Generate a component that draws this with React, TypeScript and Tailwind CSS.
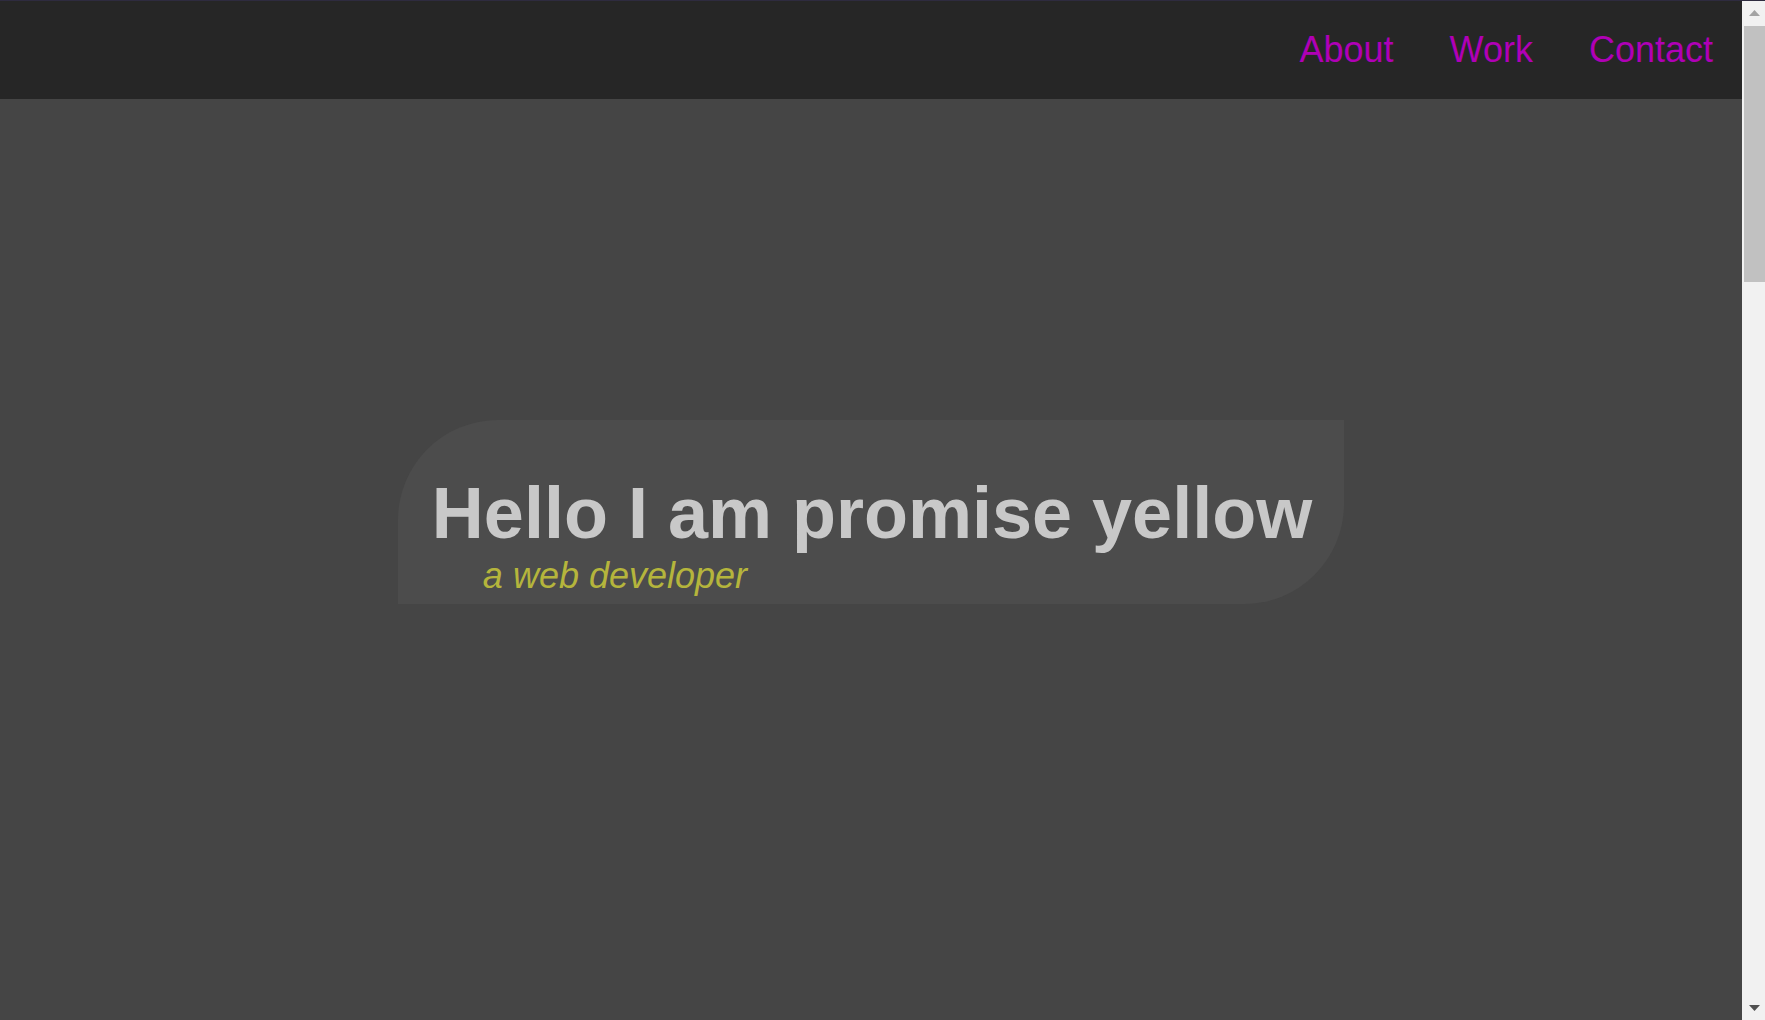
const links = ['About', 'Work', 'Contact']

function ScrollArrow({ down }: { down?: boolean }) {
  return (
    <div className="h-[24px] flex items-center justify-center pl-[2px]">
      <svg width="11" height="6" viewBox="0 0 11 6" className={down ? 'fill-[#505050]' : 'fill-[#a3a3a3]'}>
        {down ? <polygon points="0,0 11,0 5.5,6" /> : <polygon points="5.5,0 11,6 0,6" />}
      </svg>
    </div>
  )
}

export default function App() {
  return (
    <div className="h-screen w-full flex flex-col overflow-hidden font-['Liberation_Sans',Arial,sans-serif]">
      {/* window frame line */}
      <div className="h-px bg-[#2e2b3f]" />

      <div className="flex-1 flex min-h-0">
        <div className="flex-1 flex flex-col">
          {/* Nav */}
          <nav className="h-[98px] bg-[#262626] flex items-center justify-end pr-[1px]">
            <ul className="flex">
              {links.map((name) => (
                <li key={name}>
                  <a href="#" className="px-7 text-[36px] leading-[1.15] text-[#b000b6]">
                    {name}
                  </a>
                </li>
              ))}
            </ul>
          </nav>

          {/* Hero */}
          <main className="flex-1 bg-[#454545] flex justify-center items-start pt-[321px]">
            <div className="bg-[#4c4c4c] rounded-tl-[100px] rounded-br-[100px] pl-[34px] pr-[32px] pt-[52px] pb-[8px]">
              <h1 className="text-[72px] leading-[1.15] font-bold text-[#c8c8c8] whitespace-nowrap">
                Hello I am promise yellow
              </h1>
              <p className="ml-[51px] text-[36px] leading-[1.15] italic text-[#b5b53c]">a web developer</p>
            </div>
          </main>
        </div>

        {/* Scrollbar */}
        <div className="w-[23px] bg-[#f1f1f1] flex flex-col">
          <ScrollArrow />
          <div className="h-[256px] ml-[2px] mt-px bg-[#c1c1c1]" />
          <div className="flex-1" />
          <ScrollArrow down />
        </div>
      </div>
    </div>
  )
}
